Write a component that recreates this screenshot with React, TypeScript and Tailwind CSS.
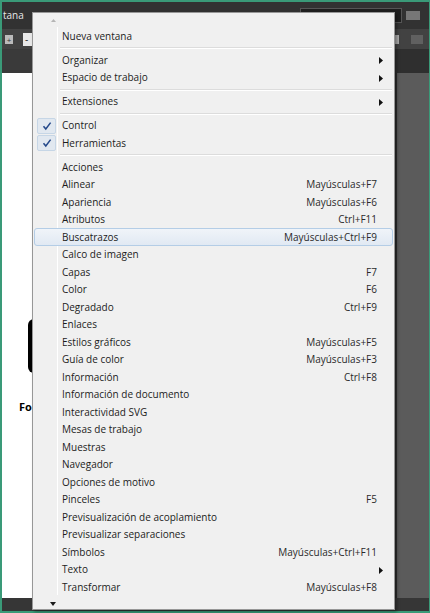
import React from 'react';

type Row =
  | { kind: 'sep' }
  | { kind: 'item'; label: string; shortcut?: string; sub?: boolean; checked?: boolean; hover?: boolean };

const sep: Row = { kind: 'sep' };
const it = (label: string, shortcut?: string, extra: Partial<Extract<Row, { kind: 'item' }>> = {}): Row => ({
  kind: 'item',
  label,
  shortcut,
  ...extra,
});

const rows: Row[] = [
  it('Nueva ventana'),
  sep,
  it('Organizar', undefined, { sub: true }),
  it('Espacio de trabajo', undefined, { sub: true }),
  sep,
  it('Extensiones', undefined, { sub: true }),
  sep,
  it('Control', undefined, { checked: true }),
  it('Herramientas', undefined, { checked: true }),
  sep,
  it('Acciones'),
  it('Alinear', 'Mayúsculas+F7'),
  it('Apariencia', 'Mayúsculas+F6'),
  it('Atributos', 'Ctrl+F11'),
  it('Buscatrazos', 'Mayúsculas+Ctrl+F9', { hover: true }),
  it('Calco de imagen'),
  it('Capas', 'F7'),
  it('Color', 'F6'),
  it('Degradado', 'Ctrl+F9'),
  it('Enlaces'),
  it('Estilos gráficos', 'Mayúsculas+F5'),
  it('Guía de color', 'Mayúsculas+F3'),
  it('Información', 'Ctrl+F8'),
  it('Información de documento'),
  it('Interactividad SVG'),
  it('Mesas de trabajo'),
  it('Muestras'),
  it('Navegador'),
  it('Opciones de motivo'),
  it('Pinceles', 'F5'),
  it('Previsualización de acoplamiento'),
  it('Previsualizar separaciones'),
  it('Símbolos', 'Mayúsculas+Ctrl+F11'),
  it('Texto', undefined, { sub: true }),
  it('Transformar', 'Mayúsculas+F8'),
];

function Check() {
  return (
    <svg width="10" height="10" viewBox="0 0 10 10">
      <path d="M1.5 5.2 L3.8 8 L8.6 1.6" fill="none" stroke="#24488a" strokeWidth="1.5" />
    </svg>
  );
}

function MenuRow({ row }: { row: Row }) {
  if (row.kind === 'sep') {
    return (
      <div className="h-[6.5px] flex flex-col justify-center pl-[27px] pr-[2px]">
        <div className="h-px bg-[#dcdcdc]" />
        <div className="h-px bg-white" />
      </div>
    );
  }
  return (
    <div
      className={`relative h-[17.5px] flex items-center pl-[27px] pr-[15px] mx-[1px] ${
        row.hover ? 'rounded-[3px] border border-[#b4cde6] bg-gradient-to-b from-[#f0f4f9] to-[#e1e9f3]' : 'border border-transparent'
      }`}
    >
      {row.checked && (
        <div className="absolute left-[2px] top-0 w-[19px] h-[16px] rounded-[2px] border border-[#c6d6e6] bg-[#e1e8f0] flex items-center justify-center">
          <Check />
        </div>
      )}
      <span className="flex-1 whitespace-nowrap">{row.label}</span>
      {row.shortcut && <span className="whitespace-nowrap text-[#2a2a2a]">{row.shortcut}</span>}
      {row.sub && (
        <svg className="absolute right-[9px] top-[5px]" width="4" height="7" viewBox="0 0 4 7">
          <path d="M0 0 L4 3.5 L0 7 Z" fill="#111" />
        </svg>
      )}
    </div>
  );
}

export default function App() {
  return (
    <div className="relative w-[430px] h-[613px] overflow-hidden bg-[#3a9a78] p-[2px] pr-[1px] font-['Open_Sans','Noto_Sans',sans-serif]">
      <div className="flex flex-col w-full h-full bg-[#3b3b3b]">
        {/* barra superior */}
        <div className="h-[27px] shrink-0 flex items-center bg-[#323232] text-[10px]">
          <span className="text-[#e8e8e8] pl-[1px] w-[88px]">tana</span>
          <div className="w-[14px] h-[8px] border border-[#888] mr-[24px]" />
          <div className="w-[16px] h-[8px] bg-[#999] mr-[32px]" />
          <span className="text-[#888] text-[9px] w-[124px]">Aspectos esenciales</span>
          <div className="w-[102px] h-[15px] bg-[#1f1f1f] border border-[#555]" />
          <div className="ml-[4px] w-[14px] h-[9px] bg-[#777]" />
        </div>
        {/* barra de control */}
        <div className="h-[20px] shrink-0 flex items-center bg-[#424242] pl-[3px] gap-[10px]">
          <div className="w-[8px] h-[9px] bg-[#bbb] text-[8px] leading-[9px] text-center text-[#333]">+</div>
          <div className="w-[12px] h-[13px] bg-[#e8e8e8] text-[10px] leading-[12px] text-[#222] pl-[2px]">-</div>
          <div className="flex-1" />
          <div className="w-[8px] h-[9px] bg-[#aaa] mr-[2px]" />
          <div className="w-[12px] h-[9px] bg-[#606060] mr-[6px]" />
        </div>
        <div className="h-[24px] shrink-0 flex">
          <div className="flex-1 bg-[#3a3a3a]" />
          <div className="w-[35px] bg-[#2f2f2f]" />
        </div>
        {/* area principal */}
        <div className="flex-1 flex min-h-0">
          <div className="flex-1 bg-white flex flex-col">
            <div className="h-[246px]" />
            <div className="ml-[26px] w-[6px] h-[54px] rounded-l-[6px] bg-black" />
            <div className="h-[28px]" />
            <span className="pl-[17px] text-[11px] font-bold text-black leading-none">Fo</span>
          </div>
          <div className="w-[35px] flex bg-[#5b5b5b]">
            <div className="w-[3px] bg-[#2d2d2d]" />
          </div>
        </div>
        <div className="h-[13px] shrink-0 bg-[#363636]" />
      </div>

      {/* menú Ventana */}
      <div className="absolute left-[32px] top-[12px] w-[363px] h-[598px] bg-[#f0f0f0] border border-[#979797] shadow-[2px_2px_3px_rgba(0,0,0,0.35)] text-[10px] text-[#1c1c1c] flex flex-col">
        <div className="absolute left-[24px] top-[14px] bottom-[14px] w-px bg-[#e2e3e3] border-r border-white" />
        <div className="h-[14.25px] shrink-0 relative">
          <svg className="absolute left-[18px] top-[6px]" width="5" height="3" viewBox="0 0 5 3">
            <path d="M0 3 L2.5 0 L5 3 Z" fill="#b5b5b5" />
          </svg>
        </div>
        <div className="relative flex flex-col">
          {rows.map((r, i) => (
            <MenuRow key={i} row={r} />
          ))}
        </div>
        <div className="flex-1 relative">
          <svg className="absolute left-[17px] top-[6px]" width="6" height="4" viewBox="0 0 6 4">
            <path d="M0 0 L6 0 L3 4 Z" fill="#1a1a1a" />
          </svg>
        </div>
      </div>
    </div>
  );
}
